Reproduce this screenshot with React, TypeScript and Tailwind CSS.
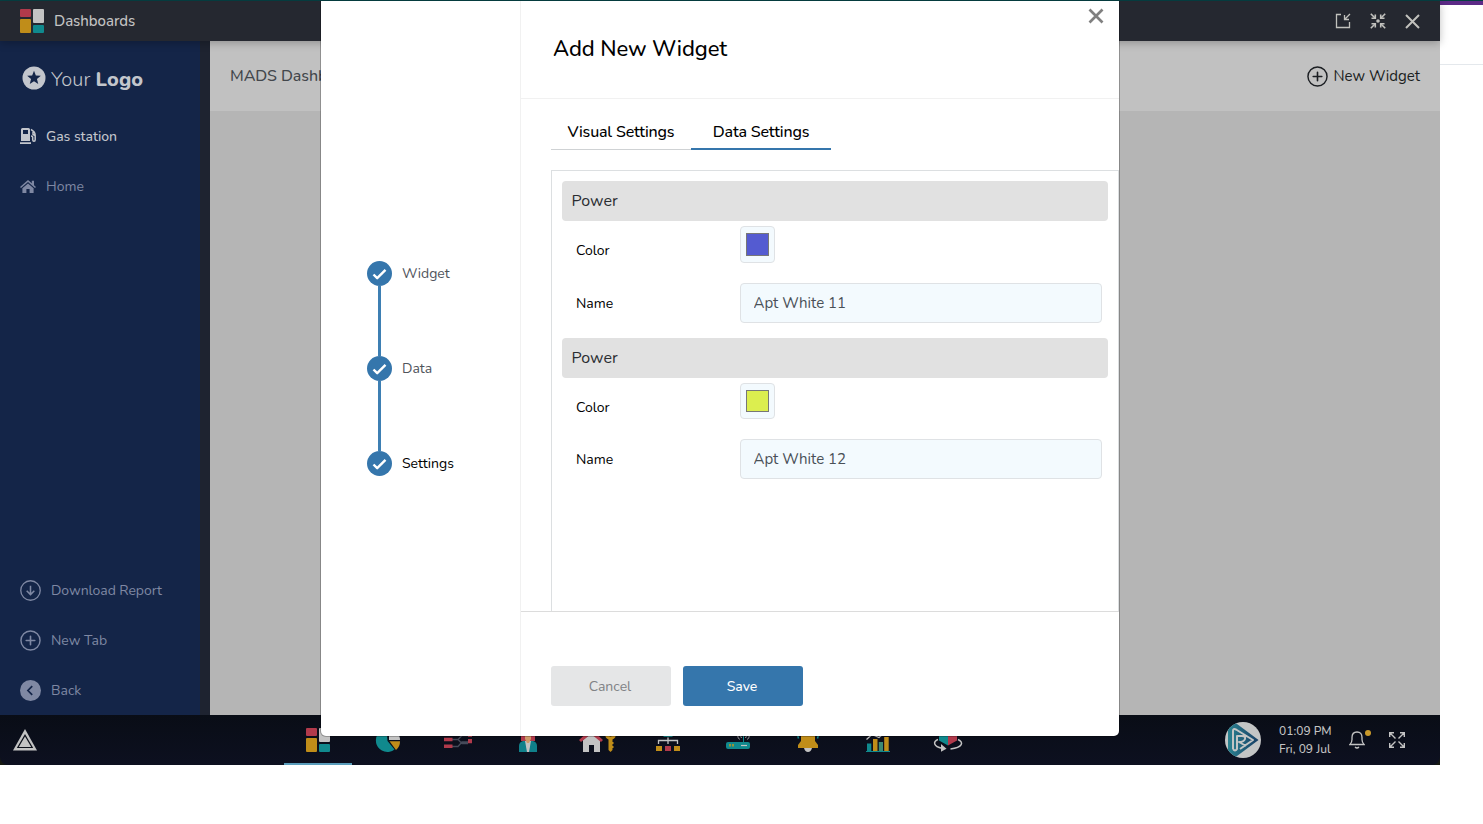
import type { ReactNode } from 'react';

const taskbarIcons: ReactNode[] = [
  <g key="dash">
    <rect x="8" y="0" width="11" height="8" rx="1" fill="#b13a4b" />
    <rect x="8" y="10" width="11" height="14" rx="1" fill="#c08d19" />
    <rect x="21" y="0" width="11" height="14" rx="1" fill="#c3c3c3" />
    <rect x="21" y="16" width="11" height="8" rx="1" fill="#10898d" />
  </g>,
  <g key="pie">
    <path d="M18.5 1A11.5 11.5 0 1 0 26.5 21.5L19.5 13Z" fill="#10898d" />
    <path d="M21 1a11 11 0 0 1 11 11H21Z" fill="#c3c3c3" />
    <path d="M21.5 13.3H32a11 11 0 0 1-4 8.7Z" fill="#c08d19" />
  </g>,
  <g key="flow">
    <path d="M14 11.500h6l4 4h6M14 18.500h6l4-4.500h6M20 11.500l4-4h6" fill="none" stroke="#454a59" strokeWidth="1.3" />
    <path d="M6 9.700h8.500v3.600H6zM6 16.500h8.500V20H6zM30 5h4v4h-4zM30 11h4v4.300h-4z" fill="#b13a4b" />
  </g>,
  <g key="agent">
    <path d="M13 13V8q0-7 7-7t7 7v5Z" fill="#b13a4b" />
    <path d="M11 24v-6q0-4 4-5h10q4 1 4 5v6Z" fill="#10808a" />
    <path d="M17 13h6l-2 11h-2Z" fill="#c3c3c3" />
    <path d="M17 5h6v6l-2 4h-2l-2-4Z" fill="#ce9a69" />
  </g>,
  <g key="property">
    <path d="M5 12 13.500 5 22 12v12h-6v-7h-5v7H5Z" fill="#c3c3c3" />
    <path d="M1 12 13 1l12 11-2 2-10-8-10 8Z" fill="#b13a4b" />
    <path d="M32.500 1a5.500 5.500 0 0 0-2 10.500V22l2 2 2-2v-2h1v-2h-1v-2h1v-2h-1v-2.500A5.500 5.500 0 0 0 32.500 1Zm0 3.500a2 2 0 1 1 0 4 2 2 0 0 1 0-4Z" fill="#c08d19" />
  </g>,
  <g key="tree">
    <path d="M15.500 1h9v8h-9Z" fill="#10898d" />
    <path d="M20 9.500V16M10.500 16v-3.500h19V16" fill="none" stroke="#c3c3c3" strokeWidth="1.300" />
    <path d="M8 18h6v5H8zM26 18h6v5h-6z" fill="#c08d19" />
    <path d="M17 18h6v5h-6z" fill="#b13a4b" />
  </g>,
  <g key="router">
    <rect x="8" y="14" width="24" height="7" rx="2" fill="#10898d" />
    <path d="M25.500 6v8" stroke="#10898d" strokeWidth="1" />
    <path d="M19.500 6.500q0 3 2 5M22.500 6.500q0 2 1 3.500M31.500 6.500q0 3-2 5M28.500 6.500q0 2-1 3.500" fill="none" stroke="#a3a3a6" strokeWidth="1" />
    <path d="M11 16h2v2.500h-2zM14 16h2v2.500h-2z" fill="#9a9436" />
    <path d="M23 17.500h6" stroke="#c3c3c3" strokeWidth="1.200" />
  </g>,
  <g key="bell">
    <path d="M16 20h8q-1 4-4 4t-4-4Z" fill="#c3c3c3" />
    <path d="M13 8q0-6 7-6t7 6v5l3 4v3H10v-3l3-4Z" fill="#c08d19" />
    <path d="M9.500 6.500l1 4M30.500 6.500l-1 4" stroke="#10898d" strokeWidth="1.500" />
  </g>,
  <g key="chart">
    <path d="M8.500 11.500 14 6.500l7 3 9-8" fill="none" stroke="#c3c3c3" strokeWidth="1.300" />
    <path d="M9 15.500h4.300V23H9zM8 23h24v1H8z" fill="#10898d" />
    <path d="M15 11h4.500v12H15zM26.200 9h4.500v14h-4.500z" fill="#c08d19" />
    <path d="M20.800 14h4.200v9h-4.200z" fill="#3b8974" />
  </g>,
  <g key="model">
    <path d="M11 3l9-2v16.500l-9-5Z" fill="#10898d" />
    <path d="M29 3l-9-2v16.500l9-5Z" fill="#b13a4b" />
    <path d="M10 11.500C4.500 13.500 5.500 18.500 14 20.200M30 11.500c6 2.500 5 8-7.500 9.500" fill="none" stroke="#c3c3c3" strokeWidth="1.500" />
    <path d="M13 16l5.500 4.800-5.500 3Z" fill="#c3c3c3" />
  </g>,
];

function DashboardsLogo() {
  return (
    <svg className="size-6" viewBox="0 0 24 24">
      <rect width="11" height="8" rx="1" fill="#b13a4b" />
      <rect y="10" width="11" height="14" rx="1" fill="#c08d19" />
      <rect x="13" width="11" height="14" rx="1" fill="#c3c3c3" />
      <rect x="13" y="16" width="11" height="8" rx="1" fill="#10898d" />
    </svg>
  );
}

function PlusCircle({ className }: { className: string }) {
  return (
    <svg className={className} viewBox="0 0 22 22" fill="none" stroke="currentColor">
      <circle cx="11" cy="11" r="10" strokeWidth="1.500" />
      <path d="M11 6.500v9M6.500 11h9" strokeWidth="1.700" strokeLinecap="round" />
    </svg>
  );
}

function TitleBar() {
  return (
    <header className="relative flex h-10 items-center bg-[#252830] px-5 shadow-[0_2px_8px_rgba(0,0,0,0.25)]">
      <DashboardsLogo />
      <h1 className="ml-[10px] text-[15px] font-medium tracking-[-0.05px] text-[#c3c3c3]">Dashboards</h1>
      <div className="ml-auto flex items-center gap-[19px] text-[#c1c1bd]">
        <svg className="size-4" viewBox="0 0 16 16" fill="none" stroke="currentColor" strokeWidth="1.300">
          <path d="M6 1.500H1.500v13h13V9" />
          <path d="M15 1 9.500 6.500M9.500 2v4.500H14" />
        </svg>
        <svg className="size-4" viewBox="0 0 16 16" fill="none" stroke="currentColor" strokeWidth="1.600">
          <path d="M.8.8 5 5M15.200.8 11 5M.8 15.200 5 11M15.200 15.200 11 11" />
          <path d="M5.300 1.500v3.800H1.500M10.700 1.500v3.800h3.800M5.300 14.500v-3.800H1.500M10.700 14.500v-3.800h3.800" />
          <circle cx="8" cy="8" r="1" fill="currentColor" />
        </svg>
        <svg className="size-[15px]" viewBox="0 0 15 15" stroke="currentColor" strokeWidth="2">
          <path d="M1 1l13 13M14 1 1 14" />
        </svg>
      </div>
    </header>
  );
}

function Sidebar() {
  return (
    <aside className="flex w-[210px] flex-col border-r-[10px] border-[#1e2330] bg-[#142548] text-sm text-[#7f88a3]">
      <div className="flex h-[70px] items-center pt-[4px] pl-[22px] text-[#c3c6cc]">
        <svg className="size-6" viewBox="0 0 24 24">
          <circle cx="12" cy="12" r="11.500" fill="currentColor" />
          <path d="m12 4.800 1.850 4.700 5 .3-3.900 3.200 1.300 4.900L12 15.200 7.750 17.900l1.300-4.900-3.900-3.200 5-.3Z" fill="#142548" />
        </svg>
        <span className="ml-[5px] pt-[4px] text-[20px] font-light tracking-[0.100px]">
          Your <b className="font-extrabold">Logo</b>
        </span>
      </div>
      <a className="flex h-[50px] items-center pl-5 text-[#c3c6cc]">
        <svg className="size-4" viewBox="0 0 16 16">
          <path d="M2.500 0h6A1.500 1.500 0 0 1 10 1.500V13H1V1.500A1.500 1.500 0 0 1 2.500 0ZM3 2v4h5V2ZM0 14.300h11V16H0Z" fill="currentColor" fillRule="evenodd" />
          <path d="M11 1.300l3 2.500q1.200 1.500 1.200 4v4q0 1.500-1.200 1.500t-1.300-1.500V9q0-1-1.700-1M13 4v2.500l2 1" fill="none" stroke="currentColor" strokeWidth="1.500" />
        </svg>
        <span className="ml-[10px] pt-px font-medium tracking-[-0.050px]">Gas station</span>
      </a>
      <a className="flex h-[50px] items-center pl-5">
        <svg className="h-[13px] w-4" viewBox="0 0 16 13" fill="currentColor">
          <path d="M8 0 0 7l1 1.100L8 2l7 6.100L16 7l-2-1.800V.8h-2.200v2.500Z" />
          <path d="M8 3.400 2.400 8.200V13h4V9h3.200v4h4V8.200Z" />
        </svg>
        <span className="ml-[10px] pt-px">Home</span>
      </a>
      <div className="mt-auto">
        <a className="flex h-[50px] items-center pl-5">
          <svg className="size-[21px]" viewBox="0 0 22 22" fill="none" stroke="currentColor">
            <circle cx="11" cy="11" r="10.200" strokeWidth="1.400" />
            <path d="M11 6v9M7 11.300l4 4 4-4" strokeWidth="1.600" />
          </svg>
          <span className="ml-[10px] pt-px tracking-[-0.060px]">Download Report</span>
        </a>
        <a className="flex h-[50px] items-center pl-5">
          <PlusCircle className="size-[21px]" />
          <span className="ml-[10px] pt-px">New Tab</span>
        </a>
        <a className="flex h-[50px] items-center pl-5">
          <svg className="size-[21px]" viewBox="0 0 22 22">
            <circle cx="11" cy="11" r="11" fill="currentColor" />
            <path d="m12.800 6.500-4.500 4.500 4.500 4.500" fill="none" stroke="#142548" strokeWidth="1.800" />
          </svg>
          <span className="ml-[10px] pt-px">Back</span>
        </a>
      </div>
    </aside>
  );
}

function Taskbar() {
  return (
    <div className="bg-[#161912]">
      <footer className="flex h-[50px] items-center rounded-b-[8px] bg-linear-to-b from-[#090d16] to-[#0d1020] pr-[35px] pl-[13px]">
        <svg className="h-6 w-6" viewBox="0 0 24 24">
          <path d="M12 1 24 22.500H0Z" fill="#c3c3c3" />
          <path d="M12 6 20.200 20H3.800Z" fill="#0b0f19" />
          <path d="M12 8.500 18.200 19H5.800Z" fill="#c3c3c3" />
        </svg>
        <nav className="ml-[247px] flex gap-[2px]">
          {taskbarIcons.map((icon, i) => (
            <div
              key={i}
              className={
                i === 0
                  ? 'flex h-[50px] w-[68px] items-center justify-center border-b-2 border-[#5a9dbb] pt-[2px]'
                  : 'flex h-[50px] w-[68px] items-center justify-center'
              }
            >
              <svg className="h-6 w-10" viewBox="0 0 40 24">{icon}</svg>
            </div>
          ))}
        </nav>
        <svg className="ml-auto size-9 shrink-0" viewBox="0 0 36 36">
          <defs>
            <linearGradient id="avatar" x1="0" x2="1">
              <stop offset="0" stopColor="#2c8290" />
              <stop offset="1" stopColor="#173e65" />
            </linearGradient>
            <clipPath id="avatar-clip">
              <circle cx="18" cy="18" r="18" />
            </clipPath>
          </defs>
          <circle cx="18" cy="18" r="18" fill="#c3c5c5" />
          <g clipPath="url(#avatar-clip)">
            <path d="M3 4 10 .500 33.500 18 10 35.500 3 32Z" fill="url(#avatar)" />
            <path d="M8 27V9q0-3 3-1.500L28 18 15 27M8 27q2 3 4 0V14h5q4 0 3 3t-6 3l7 4" fill="none" stroke="#c3c5c5" strokeWidth="2" strokeLinejoin="round" />
          </g>
        </svg>
        <div className="ml-[18px] w-[53px] text-[12px] leading-[18px] font-medium whitespace-nowrap text-[#c3c3c3]">
          <div>01:09 PM</div>
          <div>Fri, 09 Jul</div>
        </div>
        <div className="relative ml-[17px]">
          <svg className="h-[18px] w-4" viewBox="0 0 16 18" fill="none" stroke="#c3c3c3" strokeWidth="1.300">
            <path d="M1 13.500h14q-2-2-2-5V6.500Q13 1 8 1T3 6.500v2q0 3-2 5ZM6 16q2 2 4 0" />
          </svg>
          <span className="absolute -top-[1px] -right-[6px] size-[6px] rounded-full bg-[#c9992a]" />
        </div>
        <svg className="ml-[24px] size-4" viewBox="0 0 16 16" fill="none" stroke="#c3c3c3" strokeWidth="1.400">
          <path d="M.7 5V.7H5M11 .7h4.300V5M15.300 11v4.300H11M5 15.300H.7V11M1 1l5.500 5.500M15 1 9.500 6.500M1 15l5.500-5.500M15 15 9.500 9.500" />
        </svg>
      </footer>
    </div>
  );
}

function CheckDot() {
  return (
    <svg className="size-[25px]" viewBox="0 0 25 25">
      <circle cx="12.500" cy="12.500" r="12.500" fill="#3576ac" />
      <path d="m6.500 13.500 3.700 3.700 8.300-8.300" fill="none" stroke="#fff" strokeWidth="2.400" strokeLinejoin="round" />
    </svg>
  );
}

function Steps() {
  const steps = ['Widget', 'Data', 'Settings'];
  return (
    <div className="flex w-[199px] flex-col pt-[260px] pl-[46px]">
      {steps.map((step, i) => (
        <div key={step}>
          {i > 0 && <div className="ml-[11px] h-[70px] w-[3px] bg-[#3d7fb3]" />}
          <div className="flex h-[25px] items-center">
            <CheckDot />
            <span className={i === 2 ? 'ml-[10px] text-sm text-black' : 'ml-[10px] text-sm text-[#50545b]'}>{step}</span>
          </div>
        </div>
      ))}
    </div>
  );
}

function Series({ name, color, swatchClass, rowClass }: { name: string; color: string; swatchClass: string; rowClass: string }) {
  return (
    <section className="mb-[15px]">
      <h3 className="flex h-10 items-center rounded-[4px] bg-[#e1e1e1] px-[9.500px] text-base text-[#2a2d31]">Power</h3>
      <div className={rowClass}>
        <span className="w-[164px] pt-[15px]">Color</span>
        <div className={swatchClass}>
          <div className="h-full w-full border border-[#777]" style={{ backgroundColor: color }} />
        </div>
      </div>
      <div className="flex h-10 items-center pr-[6px] pl-[14px] text-sm text-black">
        <span className="w-[164px] pt-px">Name</span>
        <input
          className="h-10 flex-1 rounded-[4px] border border-[#dfe2e5] bg-[#f3fafe] px-[12.500px] pb-px text-[15px] text-[#495057] outline-none"
          defaultValue={name}
        />
      </div>
    </section>
  );
}

function Modal() {
  return (
    <div className="absolute top-px left-[321px] z-20 flex h-[735px] w-[798px] rounded-b-[5px] bg-white shadow-[0_0_0_1px_rgba(0,0,0,0.25)] [clip-path:inset(0_-2px_-2px_-2px)]">
      <Steps />
      <div className="flex flex-1 flex-col border-l border-[#f1f1f1]">
        <div className="relative flex h-[98px] items-center border-b border-[#f1f1f1] pl-[32px]">
          <h2 className="text-[22px] font-medium tracking-[-0.100px] text-black">Add New Widget</h2>
          <svg className="absolute top-[7px] right-[15px] size-4" viewBox="0 0 16 16" stroke="#808080" strokeWidth="2.700">
            <path d="M1.500 1.500l13 13M14.500 1.500l-13 13" />
          </svg>
        </div>
        <div className="flex h-[513px] flex-col border-b border-[#dcdcdc] pt-[15px] pl-[30px]">
          <div className="flex h-[36px] text-base font-medium tracking-[-0.180px] text-black">
            <div className="flex h-[36px] w-[140px] items-center justify-center border-b border-[#cfd2d4]">Visual Settings</div>
            <div className="flex h-[36px] w-[140px] items-center justify-center border-b-2 border-[#3576ac] pt-px">Data Settings</div>
          </div>
          <div className="mt-5 flex-1 border-x border-t border-[#dcdfe1] p-[10px]">
            <Series
              name="Apt White 11"
              color="#545bd1"
              rowClass="flex h-[62px] pt-[5px] pl-[14px] text-sm text-black"
              swatchClass="h-[37px] w-[35px] rounded-[4px] border border-[#dfe2e5] bg-[#f3fafe] px-[5px] py-[6px]"
            />
            <Series
              name="Apt White 12"
              color="#dcee4f"
              rowClass="flex h-[61px] pt-[5px] pl-[14px] text-sm text-black"
              swatchClass="h-[36px] w-[35px] rounded-[4px] border border-[#dfe2e5] bg-[#f3fafe] px-[5px] py-[6px]"
            />
          </div>
        </div>
        <div className="flex gap-3 pt-[54px] pl-[30px] text-sm">
          <button className="h-10 w-[120px] rounded-[3px] bg-[#e5e6e7] pt-px pr-[2px] text-[#808285]">Cancel</button>
          <button className="h-10 w-[120px] rounded-[3px] bg-[#3576ac] pt-px pr-[2px] font-medium text-white">Save</button>
        </div>
      </div>
    </div>
  );
}

export default function App() {
  return (
    <div className="relative h-[824px] w-[1483px] overflow-hidden bg-white font-['Nunito','Lato',sans-serif]">
      <div className="h-px bg-[#064043]" />
      <div className="flex">
        <div className="w-[1440px]">
          <div className="relative z-10">
            <TitleBar />
          </div>
          <div className="flex h-[674px]">
            <Sidebar />
            <main className="flex-1 bg-[#b5b5b5]">
              <div className="flex h-[70px] items-center justify-between bg-[#c1c1c1] px-5">
                <span className="text-base font-medium tracking-[-0.100px] text-[#43474c]">MADS Dashboard</span>
                <button className="flex items-center gap-[5px] text-[15px] text-[#1b1e22]">
                  <PlusCircle className="size-[21px]" />
                  New Widget
                </button>
              </div>
            </main>
          </div>
          <Taskbar />
        </div>
        <div className="h-16 flex-1 border-t-4 border-b border-t-[#5b2a86] border-b-[#e4e8ec]" />
      </div>
      <Modal />
    </div>
  );
}
